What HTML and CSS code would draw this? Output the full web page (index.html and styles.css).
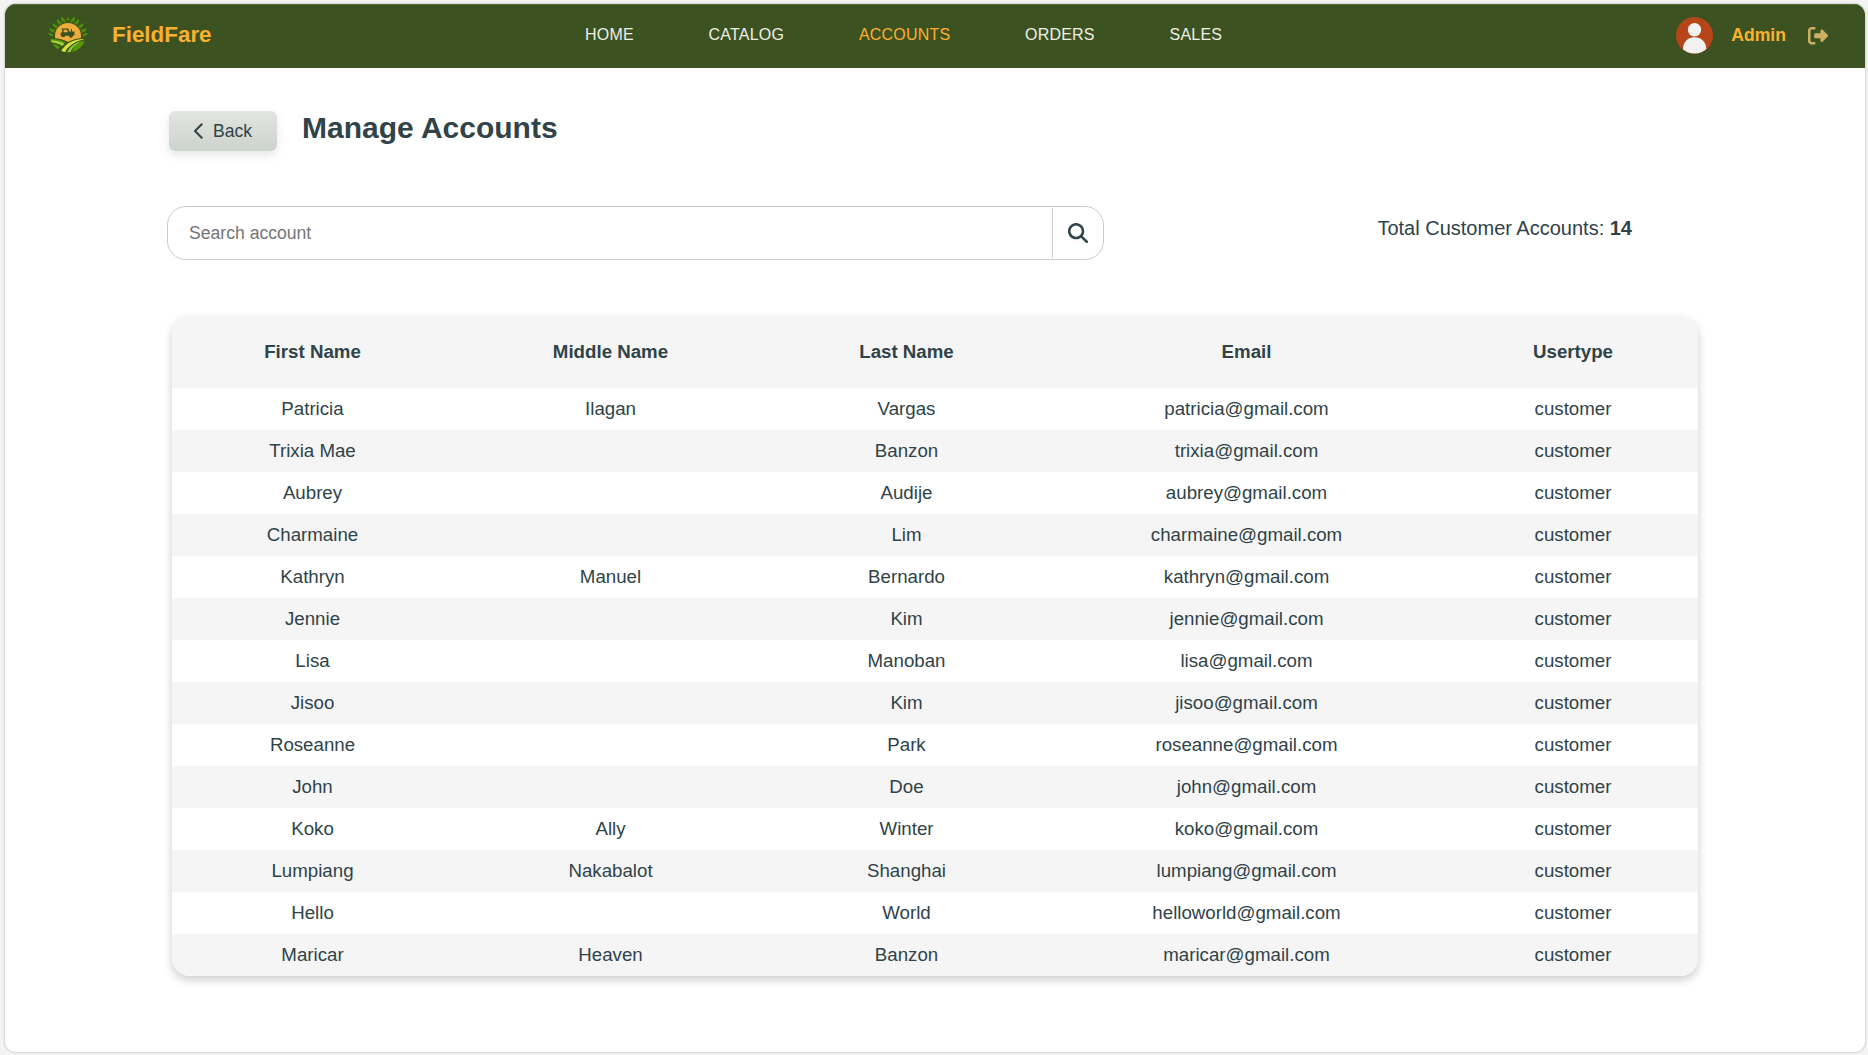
FILE: index.html
```html
<!DOCTYPE html>
<html lang="en">
<head>
<meta charset="utf-8">
<title>FieldFare - Manage Accounts</title>
<link rel="stylesheet" href="styles.css">
</head>
<body>
<div class="window">
  <header class="navbar">
    <a class="brand">
      <svg class="logo" viewBox="0 0 40 40">
        <defs><clipPath id="hills"><path d="M2 22 Q12 21.500 20 26 Q28 21.500 38 22 A18.500 18.500 0 0 1 2 22Z"/></clipPath></defs>
        <g fill="#4f8f0a">
          <g id="leaf"><path d="M17 6.500 C13.500 5.500 12.500 3 13.300 .5 C16 1.800 17.500 4 17 6.500Z"/><path d="M12.500 9 C9.500 8 8.300 5.500 9 3 C11.700 4.200 13 6.500 12.500 9Z"/><path d="M17 6.500 L20 .8 V3.500Z"/><path d="M9 12.500 C6 12 4.500 9.800 4.500 7 C7.500 8 9.300 10 9 12.500Z"/><path d="M6.500 16.500 C3.500 16.500 1.800 14.500 1.200 12 C4.200 12.300 6.300 14 6.500 16.500Z"/><path d="M5.500 20 C3 20.800 1 19.500 0 17 C2.800 16.800 5 18 5.500 20Z"/><path d="M12 8 L13 4.500 L14 7.500Z M8 11.500 L9 8.500 L10 11Z M5.800 15 L6 12 L7.500 14.500Z"/></g>
          <use href="#leaf" transform="translate(40 0) scale(-1 1)"/>
        </g>
        <circle cx="20" cy="20" r="13" fill="#efae3b"/>
        <path fill="#3c5220" d="M13 12.500h7.500l.8 3h1.700v-2.500h1v2.500h2.500v4h-1.500a2 2 0 0 1-4 .3h-3.500a2.500 2.500 0 0 1-4.500 0H12.700v-3.300h1.600l-.3-3z"/>
        <path fill="#efae3b" d="M15.300 13.700h4l.5 2.500h-4z"/>
        <g clip-path="url(#hills)">
          <path fill="#3c5220" d="M0 20h40v20H0z"/>
          <path fill="#559800" d="M2 23 Q12 22.500 17.500 26.500 L14.500 29 Q9 25 2 25.500Z"/>
          <path fill="#a5d03a" d="M2 24.500 Q11 24 16.500 28 L14 30 Q9.500 26.500 3 26.500Z"/>
          <path fill="#559800" d="M3 27.800 Q8.500 28 12 31 Q9.500 33 8.500 36 L3 33Z M38 25 Q29 26 26 31.500 Q24 34.500 23.500 39 L38 36Z"/>
          <path fill="#d5e52f" d="M37 23 Q25 22.500 17.500 29.500 Q13.500 33 12 38 L16 39 Q18.500 28 37 23Z"/>
          <path fill="#8fc73e" d="M38 23.300 Q22.500 26.500 17.500 39 L21.500 39 Q24 28.500 38 23.300Z"/>
          <path stroke="#3c5220" stroke-width=".8" fill="none" d="M38 23.400 Q21.500 26 16.800 39"/>
        </g>
      </svg>
      <span class="brand-name">FieldFare</span>
    </a>
    <nav class="menu"><a>HOME</a><a>CATALOG</a><a class="active">ACCOUNTS</a><a>ORDERS</a><a>SALES</a></nav>
    <div class="user">
      <svg class="avatar" viewBox="0 0 37 37"><defs><clipPath id="disc"><circle cx="18.500" cy="18.500" r="18"/></clipPath></defs><circle cx="18.500" cy="18.500" r="18.500" fill="#b64618"/><g fill="#f2f2f2" clip-path="url(#disc)"><circle cx="18.500" cy="12.800" r="6.700"/><path d="M7 37V32C7 25 12 20.300 18.500 20.300S30.300 25 30.300 32v5z"/></g></svg>
      <span class="user-name">Admin</span>
      <svg class="logout" viewBox="0 0 512 448"><path transform="translate(0 -32)" d="M377.900 105.900L500.700 228.700c7.200 7.200 11.300 17.100 11.300 27.300s-4.100 20.100-11.300 27.300L377.900 406.100c-6.400 6.400-15 9.900-24 9.900c-18.700 0-33.900-15.200-33.900-33.900V320H192c-17.700 0-32-14.300-32-32V224c0-17.700 14.300-32 32-32H320V129.900c0-18.700 15.200-33.900 33.900-33.900c9 0 17.600 3.600 24 9.900zM160 96H96c-17.700 0-32 14.300-32 32V384c0 17.700 14.300 32 32 32h64c17.700 0 32 14.300 32 32s-14.300 32-32 32H96c-53 0-96-43-96-96V128C0 75 43 32 96 32h64c17.700 0 32 14.300 32 32s-14.300 32-32 32z"/></svg>
    </div>
  </header>
  <main class="content">
    <div class="heading">
      <button class="back"><svg viewBox="0 0 10 16"><path d="M8.700 1.200L2 8l6.700 6.800"/></svg>Back</button>
      <h1>Manage Accounts</h1>
    </div>
    <div class="toolbar">
      <form class="search">
        <input type="text" placeholder="Search account">
        <button type="button" aria-label="Search"><svg viewBox="0 0 512 512"><path d="M416 208c0 45.900-14.900 88.300-40 122.700L502.600 457.400c12.500 12.500 12.500 32.800 0 45.300s-32.800 12.500-45.300 0L330.700 376c-34.400 25.200-76.800 40-122.700 40C93.100 416 0 322.900 0 208S93.100 0 208 0S416 93.100 416 208zM208 352a144 144 0 1 0 0-288 144 144 0 1 0 0 288z"/></svg></button>
      </form>
      <p class="total">Total Customer Accounts: <b>14</b></p>
    </div>
    <table class="accounts">
      <colgroup><col class="c-first"><col class="c-middle"><col class="c-last"><col class="c-email"><col class="c-type"></colgroup>
      <thead><tr><th>First Name</th><th>Middle Name</th><th>Last Name</th><th>Email</th><th>Usertype</th></tr></thead>
      <tbody>
        <tr><td>Patricia</td><td>Ilagan</td><td>Vargas</td><td>patricia@gmail.com</td><td>customer</td></tr>
        <tr><td>Trixia Mae</td><td></td><td>Banzon</td><td>trixia@gmail.com</td><td>customer</td></tr>
        <tr><td>Aubrey</td><td></td><td>Audije</td><td>aubrey@gmail.com</td><td>customer</td></tr>
        <tr><td>Charmaine</td><td></td><td>Lim</td><td>charmaine@gmail.com</td><td>customer</td></tr>
        <tr><td>Kathryn</td><td>Manuel</td><td>Bernardo</td><td>kathryn@gmail.com</td><td>customer</td></tr>
        <tr><td>Jennie</td><td></td><td>Kim</td><td>jennie@gmail.com</td><td>customer</td></tr>
        <tr><td>Lisa</td><td></td><td>Manoban</td><td>lisa@gmail.com</td><td>customer</td></tr>
        <tr><td>Jisoo</td><td></td><td>Kim</td><td>jisoo@gmail.com</td><td>customer</td></tr>
        <tr><td>Roseanne</td><td></td><td>Park</td><td>roseanne@gmail.com</td><td>customer</td></tr>
        <tr><td>John</td><td></td><td>Doe</td><td>john@gmail.com</td><td>customer</td></tr>
        <tr><td>Koko</td><td>Ally</td><td>Winter</td><td>koko@gmail.com</td><td>customer</td></tr>
        <tr><td>Lumpiang</td><td>Nakabalot</td><td>Shanghai</td><td>lumpiang@gmail.com</td><td>customer</td></tr>
        <tr><td>Hello</td><td></td><td>World</td><td>helloworld@gmail.com</td><td>customer</td></tr>
        <tr><td>Maricar</td><td>Heaven</td><td>Banzon</td><td>maricar@gmail.com</td><td>customer</td></tr>
      </tbody>
    </table>
  </main>
</div>
</body>
</html>
```
FILE: styles.css
```css
* { box-sizing: border-box; }
body {
  margin: 0;
  height: 1055px;
  padding: 4px 3px 3px 5px;
  overflow: hidden;
  background: #f4f4f4;
  color: #2f4349;
  font-family: "Liberation Sans", Arial, sans-serif;
}
.window {
  height: 1048px;
  background: #fff;
  border-radius: 11px;
  overflow: hidden;
  box-shadow: 0 0 2px 1px rgba(0, 0, 0, .14);
}
.navbar {
  height: 64px;
  display: grid;
  grid-template-columns: 580px 1fr auto;
  align-items: center;
  padding-right: 37px;
  background: #3c5220;
  border-top: 1px solid #556b38;
}
.brand { display: flex; align-items: center; padding-left: 43px; }
.logo { width: 40px; height: 40px; margin-top: -2px; }
.brand-name { margin: 0 0 3px 24px; font-size: 22.4px; font-weight: bold; color: #fcb02f; }
.menu { display: flex; gap: 74.8px; font-size: 16px; letter-spacing: .2px; color: #efefe8; padding-bottom: 4px; }
.menu .active { color: #fcb02f; }
.user { display: flex; align-items: center; }
.avatar { width: 37px; height: 37px; margin-top: -2px; }
.user-name { margin: 0 22px 2px 18px; font-size: 17.6px; font-weight: bold; color: #fcb02f; }
.logout { width: 20px; height: 17.500px; margin-top: -1px; fill: #cdb066; }
.content { padding: 43px 167px 0; }
.heading { display: flex; gap: 25px; height: 95px; align-items: flex-start; }
.back {
  width: 108px;
  height: 40px;
  display: flex;
  align-items: center;
  gap: 10px;
  margin: 0 0 0 -3px;
  padding: 0 0 0 24px;
  border: 0;
  border-radius: 6px;
  background: linear-gradient(#e2e5e0, #cdd3cd);
  box-shadow: 0 4px 10px rgba(0, 0, 0, .1);
  font: 17.6px "Liberation Sans", Arial, sans-serif;
  color: inherit;
}
.back svg { width: 10px; height: 16px; margin-top: -1px; fill: none; stroke: currentColor; stroke-width: 2; stroke-linecap: round; stroke-linejoin: round; }
h1 { margin: 0; font-size: 30px; line-height: 34px; }
.toolbar { display: flex; justify-content: space-between; margin-left: -5px; height: 110px; }
.search {
  width: 937px;
  height: 54px;
  display: flex;
  padding: 1px;
  border: 1px solid #ccc;
  border-radius: 19px;
}
.search input {
  flex: 1;
  padding: 0 0 0 20px;
  border: 0;
  background: none;
  font: 17.6px "Liberation Sans", Arial, sans-serif;
}
.search button { width: 50px; padding: 0 0 1px; display: grid; place-items: center; border: 0; border-left: 1px solid #ccc; background: none; }
.search svg { width: 20px; height: 20px; fill: #2f4349; }
.total { margin: 11px 66px 0 0; font-size: 20px; line-height: 23px; }
.accounts {
  width: 1526px;
  table-layout: fixed;
  border-collapse: collapse;
  border-radius: 18px;
  overflow: hidden;
  box-shadow: 0 4px 10px rgba(0, 0, 0, .2);
  font-size: 18.700px;
  text-align: center;
}
.c-first { width: 281px; }
.c-middle { width: 315px; }
.c-last { width: 277px; }
.c-email { width: 403px; }
.c-type { width: 250px; }
.accounts th, .accounts td { padding: 0; }
.accounts th { height: 72px; padding-bottom: 1px; background: #f5f5f5; }
.accounts td { height: 42px; }
.accounts tbody tr { background: #fff; }
.accounts tbody tr:nth-child(even) { background: #f5f5f5; }
```
